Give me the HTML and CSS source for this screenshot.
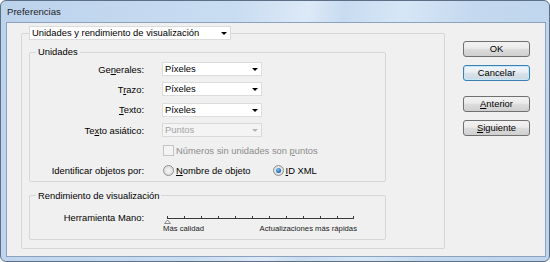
FILE: index.html
```html
<!DOCTYPE html>
<html lang="es">
<head>
    <meta charset="UTF-8">
    <meta name="viewport" content="width=device-width, initial-scale=1.0">
    <title>Preferencias</title>
    <link rel="stylesheet" href="styles.css">
</head>
<body>
    <div class="window">
        <div class="titlebar">Preferencias</div>
        <div class="client">
            <fieldset class="main-group">
                <legend>
                    <div class="select wide">Unidades y rendimiento de visualización<span class="arrow"></span></div>
                </legend>

                <fieldset class="group units">
                    <legend>Unidades</legend>
                    <div class="form-grid">
                        <label class="field-label">Ge<u>n</u>erales:</label>
                        <div class="select">Píxeles<span class="arrow"></span></div>

                        <label class="field-label">T<u>r</u>azo:</label>
                        <div class="select">Píxeles<span class="arrow"></span></div>

                        <label class="field-label"><u>T</u>exto:</label>
                        <div class="select">Píxeles<span class="arrow"></span></div>

                        <label class="field-label">Te<u>x</u>to asiático:</label>
                        <div class="select disabled">Puntos<span class="arrow"></span></div>

                        <div class="check-row">
                            <span class="checkbox"></span>
                            <span class="muted">Números sin unidades son <u>p</u>untos</span>
                        </div>

                        <label class="field-label">Identificar objetos por:</label>
                        <div class="radio-row">
                            <span class="radio-item"><span class="radio"></span><span><u>N</u>ombre de objeto</span></span>
                            <span class="radio-item"><span class="radio checked"></span><span><u>I</u>D XML</span></span>
                        </div>
                    </div>
                </fieldset>

                <fieldset class="group perf">
                    <legend>Rendimiento de visualización</legend>
                    <div class="perf-row">
                        <label class="field-label">Herramienta Mano:</label>
                        <div class="slider">
                            <svg width="194" height="13" viewBox="0 0 194 13">
                                <line x1="4" y1="7.5" x2="191" y2="7.5" stroke="#3a3a3a" stroke-width="1"/>
                                <g stroke="#3a3a3a" stroke-width="1">
                                    <line x1="4.5" y1="5" x2="4.5" y2="7"/>
                                    <line x1="21.5" y1="5" x2="21.5" y2="7"/>
                                    <line x1="38.5" y1="5" x2="38.5" y2="7"/>
                                    <line x1="55.5" y1="5" x2="55.5" y2="7"/>
                                    <line x1="72.5" y1="5" x2="72.5" y2="7"/>
                                    <line x1="89.5" y1="5" x2="89.5" y2="7"/>
                                    <line x1="106.5" y1="5" x2="106.5" y2="7"/>
                                    <line x1="123.5" y1="5" x2="123.5" y2="7"/>
                                    <line x1="140.5" y1="5" x2="140.5" y2="7"/>
                                    <line x1="157.5" y1="5" x2="157.5" y2="7"/>
                                    <line x1="174.5" y1="5" x2="174.5" y2="7"/>
                                    <line x1="190.5" y1="5" x2="190.5" y2="7"/>
                                </g>
                                <polygon points="4.5,9 1.5,12.5 7.5,12.5" fill="#f4f4f4" stroke="#8a8a8a" stroke-width="1"/>
                            </svg>
                            <div class="slider-labels">
                                <span>Más calidad</span>
                                <span>Actualizaciones más rápidas</span>
                            </div>
                        </div>
                    </div>
                </fieldset>
            </fieldset>

            <div class="buttons">
                <button class="btn">OK</button>
                <button class="btn default">Cancelar</button>
                <button class="btn spaced"><u>A</u>nterior</button>
                <button class="btn"><u>S</u>iguiente</button>
            </div>
        </div>
    </div>
</body>
</html>
```

FILE: styles.css
```css
* {
    box-sizing: border-box;
}
body {
    margin: 0;
    font-family: "Liberation Sans", Arial, sans-serif;
    font-size: 9.4px;
    color: #000;
    background: #fff;
}
.window {
    width: 550px;
    height: 262px;
    border: 1px solid #5d6f86;
    border-radius: 6px;
    background: linear-gradient(100deg, #bcd3ec 0%, #c9ddf2 40%, #dde9f7 52%, #c8dcf1 58%, #d6e6f6 68%, #c4d9ef 80%, #bdd4ed 100%);
    padding: 0 3px 4px 5px;
    display: flex;
    flex-direction: column;
}
.titlebar {
    height: 21px;
    line-height: 22px;
    padding-left: 1px;
    font-size: 9.6px;
    color: #1e1e1e;
}
.client {
    flex: 1;
    border: 1px solid #8da3bd;
    background: #f0f0f0;
    padding: 3px 0 0 14px;
    display: flex;
    align-items: flex-start;
}

/* group boxes */
fieldset {
    margin: 0;
    min-width: 0;
    border: 1px solid #d3d7da;
    border-radius: 2px;
}
.main-group {
    width: 424px;
    padding: 6px 7px 8px;
}
.main-group > legend {
    padding: 0;
    margin: 0;
}
.group {
    width: 357px;
    padding: 0;
}
.group > legend {
    margin-left: 6px;
    padding: 0 2px;
    line-height: 12px;
}
.units {
    padding-top: 1px;
}
.perf {
    margin-top: 8px;
    padding: 9px 0 5px;
}

/* dropdowns */
.select {
    position: relative;
    width: 100px;
    height: 14px;
    line-height: 12px;
    padding-left: 2px;
    background: #fff;
    border: 1px solid #dcdcdc;
    white-space: nowrap;
}
.select.wide {
    width: 202px;
}
.select .arrow {
    position: absolute;
    right: 3px;
    top: 5px;
    border-left: 3px solid transparent;
    border-right: 3px solid transparent;
    border-top: 3px solid #000;
}
.select.disabled {
    background: #f4f4f4;
    border-color: #d9d9d9;
    color: #a3a3a3;
}
.select.disabled .arrow {
    border-top-color: #b5b5b5;
}

/* unidades */
.form-grid {
    display: grid;
    grid-template-columns: 114px 100px 1fr;
    grid-auto-rows: 20.3px;
    column-gap: 18px;
    align-items: center;
}
.form-grid .select {
    grid-column: 2;
}
.field-label {
    grid-column: 1;
    text-align: right;
    white-space: nowrap;
}
.check-row,
.radio-row {
    grid-column: 2 / -1;
    display: flex;
    align-items: center;
    white-space: nowrap;
}
.check-row {
    margin-left: 1px;
}
.muted {
    color: #8c8c8c;
}
.checkbox {
    width: 11px;
    height: 11px;
    border: 1px solid #c4c4c4;
    background: #f4f4f4;
    margin-right: 2px;
}
.radio-row {
    gap: 22px;
    margin-left: 1px;
}
.radio-item {
    display: flex;
    align-items: center;
}
.radio {
    width: 11px;
    height: 11px;
    border-radius: 50%;
    border: 1px solid #8f9091;
    background: radial-gradient(circle at 50% 50%, #f6f6f6 0%, #e2e2e2 60%, #cfcfcf 100%);
    margin-right: 2px;
    position: relative;
}
.radio.checked::after {
    content: "";
    position: absolute;
    left: 2px;
    top: 2px;
    width: 5px;
    height: 5px;
    border-radius: 50%;
    background: radial-gradient(circle at 40% 35%, #7fc4f5 0%, #2a78c2 55%, #164f8f 100%);
}

/* rendimiento */
.perf-row {
    display: flex;
    align-items: flex-start;
}
.perf-row .field-label {
    width: 114px;
    line-height: 12px;
    margin-top: 1px;
}
.slider {
    margin-left: 19px;
    width: 194px;
}
.slider svg {
    display: block;
}
.slider-labels {
    display: flex;
    justify-content: space-between;
    font-size: 7.7px;
    line-height: 10px;
    color: #1a1a1a;
}

/* buttons */
.buttons {
    margin-left: 18px;
    margin-top: 15px;
    display: flex;
    flex-direction: column;
    gap: 8px;
}
.btn {
    width: 67px;
    height: 16px;
    padding: 0;
    font-family: inherit;
    font-size: 9.4px;
    line-height: 14px;
    color: #000;
    border: 1px solid #707070;
    border-radius: 3px;
    background: linear-gradient(#f2f2f2 0%, #ebebeb 45%, #dddddd 50%, #cfcfcf 100%);
}
.btn.default {
    border-color: #3c7fb1;
    box-shadow: inset 0 0 0 1px #c5e9fb;
    background: linear-gradient(#f0f5f9 0%, #e8eef3 45%, #dae3ea 50%, #ccd8e1 100%);
}
.btn.spaced {
    margin-top: 7px;
}
```
